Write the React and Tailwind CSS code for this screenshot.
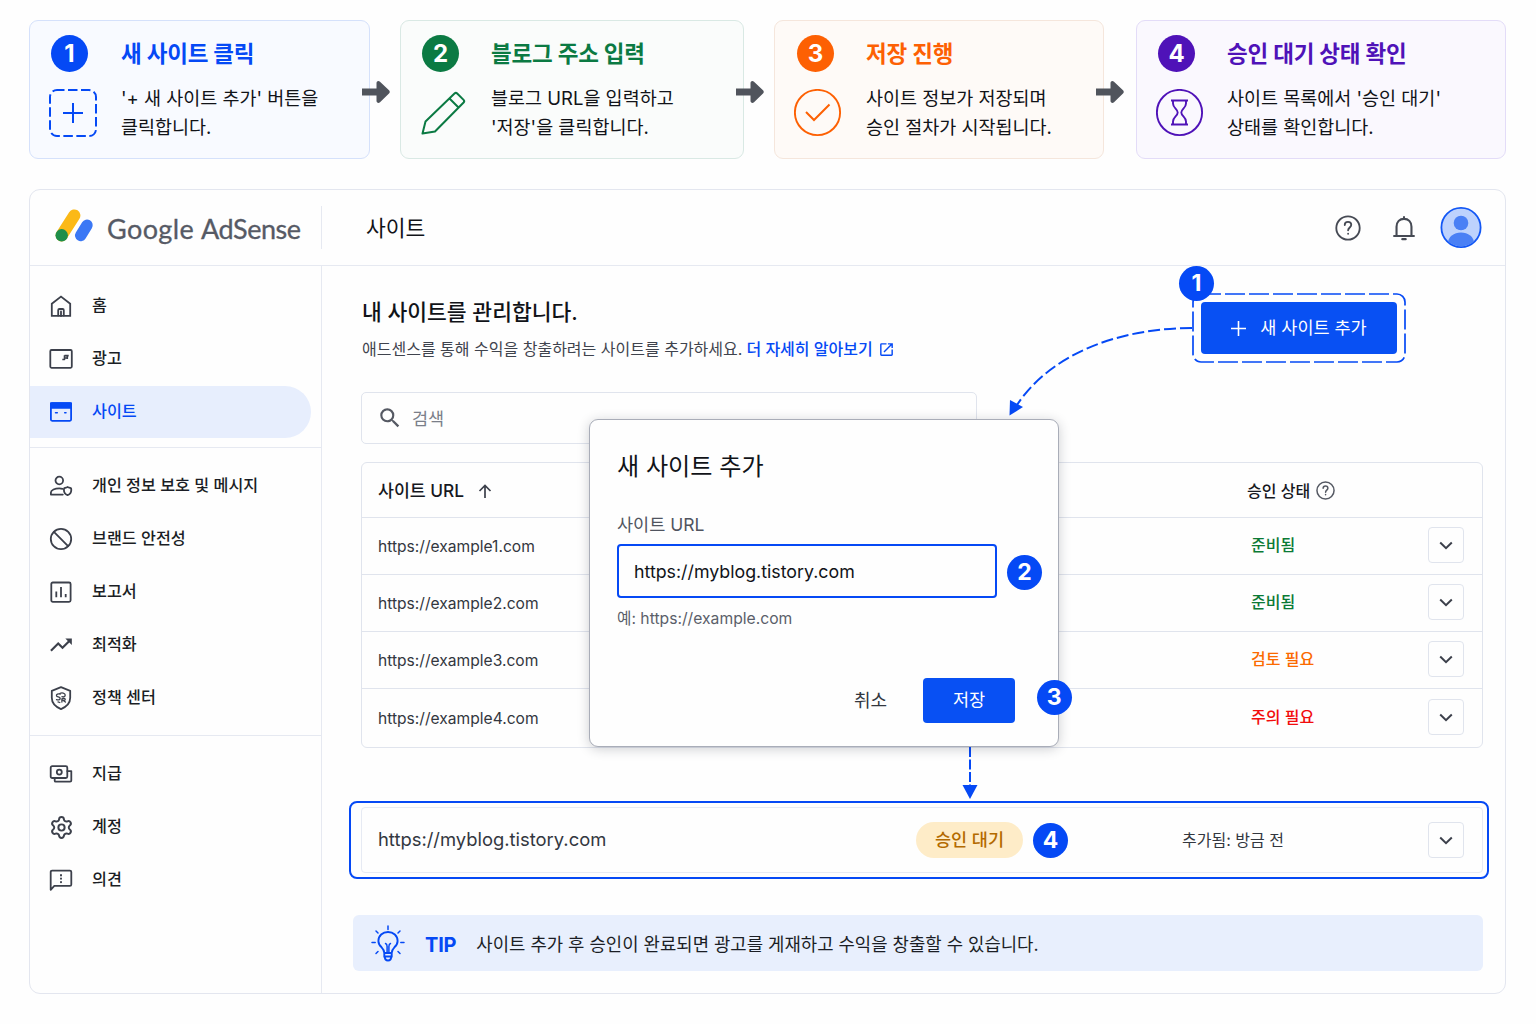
import React from 'react';
import { Settings } from 'lucide-react';
import { MdOpenInNew, MdSearch, MdTrendingUp } from 'react-icons/md';

const steps = [
  {
    n: 1,
    title: '새 사이트 클릭',
    lines: ["'+ 새 사이트 추가' 버튼을", '클릭합니다.'],
    card: 'w-[341px] mr-[30px] bg-[#f8faff] border-[#d5e1fb]',
    inner: 'pl-[21px]',
    badge: 'bg-[#0549f5]',
    text: 'text-[#0549f5]',
    gap: 'w-[70px]',
  },
  {
    n: 2,
    title: '블로그 주소 입력',
    lines: ['블로그 URL을 입력하고', "'저장'을 클릭합니다."],
    card: 'w-[344px] mr-[30px] bg-[#fafcfb] border-[#d9e9e4]',
    inner: 'pl-[21px]',
    badge: 'bg-[#0b7a43]',
    text: 'text-[#0b7a43]',
    gap: 'w-[69px]',
  },
  {
    n: 3,
    title: '저장 진행',
    lines: ['사이트 정보가 저장되며', '승인 절차가 시작됩니다.'],
    card: 'w-[330px] mr-[32px] bg-[#fefaf7] border-[#f5e6dc]',
    inner: 'pl-[22px]',
    badge: 'bg-[#fd6003]',
    text: 'text-[#fd6003]',
    gap: 'w-[69px]',
  },
  {
    n: 4,
    title: '승인 대기 상태 확인',
    lines: ["사이트 목록에서 '승인 대기'", '상태를 확인합니다.'],
    card: 'w-[370px] bg-[#faf8fe] border-[#e3dcf8]',
    inner: 'pl-[21px]',
    badge: 'bg-[#4f12b8]',
    text: 'text-[#4f12b8]',
    gap: 'w-[69px]',
  },
];

const sites = [
  { url: 'https://example1.com', status: '준비됨', color: 'text-[#0b7a35]' },
  { url: 'https://example2.com', status: '준비됨', color: 'text-[#0b7a35]' },
  { url: 'https://example3.com', status: '검토 필요', color: 'text-[#fb6a00]' },
  { url: 'https://example4.com', status: '주의 필요', color: 'text-[#f20d0d]' },
];

const Icon = ({ size = 24, sw = 1.8, className = '', children }) => (
  <svg
    width={size}
    height={size}
    viewBox="0 0 24 24"
    fill="none"
    stroke="currentColor"
    strokeWidth={sw}
    strokeLinecap="round"
    strokeLinejoin="round"
    className={`shrink-0 ${className}`}
  >
    {children}
  </svg>
);

const navGroups = [
  [
    {
      label: '홈',
      icon: (
        <Icon>
          <path d="M2.800 9.800 12 2.600l9.200 7.200V21.800H2.800Z" strokeLinejoin="miter" />
          <path d="M9.200 21.500v-5.300a1.200 1.200 0 0 1 1.200-1.200h3.200a1.200 1.200 0 0 1 1.200 1.200v5.300M12 17.500V22" />
        </Icon>
      ),
    },
    {
      label: '광고',
      icon: (
        <Icon>
          <rect x="1.300" y="3" width="21.500" height="17.800" rx="1.200" />
          <path d="M13.300 12.500h2.200V8.200M15.500 8.600h4.200M18.300 8v4M16 11h2.800" strokeWidth="1.600" strokeLinecap="butt" />
        </Icon>
      ),
    },
    {
      label: '사이트',
      active: true,
      icon: (
        <Icon>
          <rect x="1.900" y="3.200" width="20.200" height="17.600" rx="1.200" />
          <path d="M1.900 3.200h20.200v4.600H1.900z" fill="currentColor" />
          <path d="M6.500 12.700h1.800M15.700 12.700h1.300" strokeWidth="1.500" />
        </Icon>
      ),
    },
  ],
  [
    {
      label: '개인 정보 보호 및 메시지',
      icon: (
        <Icon>
          <circle cx="10.300" cy="6.500" r="3.800" />
          <path d="M13.800 20.600H1.900v-2c0-2.600 4.100-4.200 8.400-4.200 1.100 0 2.200.1 3.200.4" />
          <path d="M18.600 13c-1.300.6-2.400.9-3.500 1.300-.6 3.200.3 5.700 3.500 6.900 3.200-1.200 4.100-3.700 3.500-6.900-1.100-.4-2.200-.7-3.500-1.300Z" />
        </Icon>
      ),
    },
    {
      label: '브랜드 안전성',
      icon: (
        <Icon>
          <circle cx="12" cy="12" r="10.200" />
          <path d="m4.900 4.900 14.200 14.200" />
        </Icon>
      ),
    },
    {
      label: '보고서',
      icon: (
        <Icon>
          <rect x="2.300" y="2.500" width="19.300" height="19.300" rx="1.500" />
          <path d="M7.300 11.500v5.800M12 7v10.300M16.700 14v3.300" strokeLinecap="butt" />
        </Icon>
      ),
    },
    { label: '최적화', icon: <MdTrendingUp size={26} className="-mx-px shrink-0" /> },
    {
      label: '정책 센터',
      icon: (
        <Icon>
          <path d="m12 1.200 9.200 3.600v7c0 5.200-3.700 9-9.200 11.300-5.500-2.300-9.200-6.100-9.200-11.300v-7Z" />
          <path d="M11.300 8c-2.300-.6-4.200.2-3.800 1.800.4 1.500 3.500.8 3.700 2.500.1 1.600-2.200 2-3.700 1.300M10.800 7.500c2-1.300 5.300-.5 5.400 1.500.1 1.600-2 2.400-3.200 1.600M12.900 16v-3.200c1.600-.8 3.300-.5 3.300.6 0 1-1.500 1.100-2.200.8l2.400 1.800M9 15.900l1.800.6" strokeWidth="1.300" />
        </Icon>
      ),
    },
  ],
  [
    {
      label: '지급',
      icon: (
        <Icon>
          <rect x="1.700" y="4.200" width="16.600" height="11.800" rx="1.500" />
          <circle cx="10.300" cy="10.100" r="2.500" />
          <path d="M5.700 16.300v2.400c0 .6.400 1 1 1H21.100c.7 0 1.200-.5 1.200-1.200V9.100h-4" />
        </Icon>
      ),
    },
    { label: '계정', icon: <Settings size={25} strokeWidth={1.9} className="-mr-px shrink-0" /> },
    {
      label: '의견',
      icon: (
        <Icon>
          <path d="M1.700 21.800V4c0-.9.500-1.400 1.400-1.400h17.800c.9 0 1.400.5 1.400 1.400v12.500c0 .9-.5 1.400-1.400 1.400H5.300Z" />
          <path d="M12 7v.6M12 10.400v.4M12 14v.3" strokeWidth="2" />
        </Icon>
      ),
    },
  ],
];

const StepIcon = ({ n }) => {
  if (n === 1) {
    return (
      <svg width="48" height="48" viewBox="0 0 48 48" fill="none" stroke="currentColor" strokeWidth="2" className="-ml-[2px]">
        <rect x="1" y="1" width="46" height="46" rx="7" strokeDasharray="9.500 3.500" strokeDashoffset="2" />
        <path d="M24 14v20M14 24h20" />
      </svg>
    );
  }
  if (n === 2) {
    return (
      <svg width="48" height="48" viewBox="0 0 48 48" fill="none" stroke="currentColor" strokeWidth="2" strokeLinejoin="round" className="-ml-px">
        <path d="M1.500 44.500 4.500 32.500 33.500 4.500c.9-.8 1.900-.8 2.700 0l6.400 6.400c.8.8.8 1.700 0 2.600L14 42.500ZM28.500 9.500l9 9" />
      </svg>
    );
  }
  return (
    <svg
      width="48"
      height="48"
      viewBox="0 0 48 48"
      fill="none"
      stroke="currentColor"
      strokeWidth="1.900"
      className={n === 3 ? '-ml-[3px]' : '-ml-[2px]'}
    >
      <circle cx="23.500" cy="23.500" r="22.600" />
      {n === 3 ? (
        <path d="m12 23 8 8L35.500 15.500" strokeWidth="2" />
      ) : (
        <path d="M15 11.500h17M15 35.500h17M17 11.500v3c0 4.500 4.700 5.500 4.700 9s-4.700 4.500-4.700 9v3M30 11.500v3c0 4.500-4.700 5.500-4.700 9s4.700 4.500 4.700 9v3" />
      )}
    </svg>
  );
};

const StepArrow = () => (
  <svg width="28" height="24" viewBox="0 0 28 24" className="absolute top-[59px] -right-[21px] z-10 text-[#50545c]" fill="currentColor">
    <path d="M0 8.500h14.500V3.200c0-2 2-2.800 3.500-1.500l9 8.600c1 1 1 2.300 0 3.300l-9 8.700c-1.500 1.300-3.500.5-3.500-1.500v-5.300H0Z" />
  </svg>
);

const Badge = ({ n, className }) => (
  <span className={`flex size-[35px] shrink-0 items-center justify-center rounded-full bg-[#0549f5] text-[23px] font-bold leading-none text-white ${className}`}>
    {n}
  </span>
);

const HelpIcon = ({ size, sw }) => (
  <Icon size={size} sw={sw}>
    <circle cx="12" cy="12" r="10.800" />
    <path d="M9 9.300c0-1.800 1.300-2.900 3-2.900s3 1.100 3 2.700c0 2.300-2.900 2.500-2.900 5M12.100 17.200v.2" />
  </Icon>
);

const MoreButton = ({ className = '' }) => (
  <button className={`flex size-[36px] shrink-0 items-center justify-center rounded-[4px] border border-[#e0e4ed] text-[#3c404b] ${className}`}>
    <svg width="14" height="9" viewBox="0 0 14 9" fill="none" stroke="currentColor" strokeWidth="2">
      <path d="m1.200 1.500 5.800 5.700 5.800-5.700" />
    </svg>
  </button>
);

const Steps = () => (
  <div className="flex h-[139px]">
    {steps.map(step => (
      <div key={step.n} className={`relative flex shrink-0 rounded-[9px] border ${step.card} ${step.inner}`}>
        <div className={`flex shrink-0 flex-col pt-[14px] ${step.gap} ${step.text}`}>
          <span className={`mb-[17px] flex size-[37px] items-center justify-center rounded-full text-[24px] font-bold leading-none text-white ${step.badge}`}>
            {step.n}
          </span>
          <StepIcon n={step.n} />
        </div>
        <div className="whitespace-nowrap pt-[15px]">
          <h3 className={`text-[22.500px] leading-[36px] font-bold tracking-[-0.200px] ${step.text}`}>{step.title}</h3>
          <p className="mt-[12px] text-[18.500px] leading-[29px] text-[#111318]">
            {step.lines[0]}
            <br />
            {step.lines[1]}
          </p>
        </div>
        {step.n < 4 && <StepArrow />}
      </div>
    ))}
  </div>
);

const Header = () => (
  <header className="flex h-[76px] shrink-0 items-center border-b border-[#e6e9f1]">
    <div className="flex h-[43px] w-[292px] shrink-0 items-center border-r border-[#e6e9f1] pl-[24px]">
      <svg width="42" height="36" viewBox="0 0 42 36" fill="none" strokeLinecap="round" className="-mt-[3px] shrink-0">
        <path d="M7.700 27.300 20.300 7.500" stroke="#fbb917" strokeWidth="12.200" />
        <circle cx="7.700" cy="27.300" r="6.200" fill="#1e8e4a" />
        <path d="m26.700 27.500 6.300-10.300" stroke="#3b78f5" strokeWidth="11.400" />
      </svg>
      <span className="mt-[3px] ml-[11px] whitespace-nowrap font-[Lato] text-[27px] text-[#565a65] [-webkit-text-stroke:0.300px_#565a65]">
        <span className="tracking-[0.400px]">Google</span> <span className="tracking-[-0.500px]">AdSense</span>
      </span>
    </div>
    <h1 className="mt-px pl-[44px] text-[21.500px] text-[#111318]">사이트</h1>
    <div className="ml-auto flex items-center pr-[23.500px] text-[#464a54]">
      <HelpIcon size={26} sw={1.7} />
      <Icon size={28} sw={1.8} className="mr-[22px] ml-[29px]">
        <path d="M3.500 18.800h17M5.600 18.600V11c0-4.300 2.700-6.800 6.400-6.800s6.400 2.500 6.400 6.800v7.600M12 3.700V2.700" />
        <path d="M10.600 21.600h2.800" strokeWidth="2" />
      </Icon>
      <svg width="42" height="42" viewBox="0 0 42 42">
        <defs>
          <clipPath id="avatar">
            <circle cx="21" cy="20.500" r="19" />
          </clipPath>
        </defs>
        <circle cx="21" cy="20.500" r="19.600" fill="#bdd2fd" stroke="#1257f5" strokeWidth="1.800" />
        <g clipPath="url(#avatar)">
          <circle cx="21" cy="16" r="7.300" fill="#4a80f5" />
          <ellipse cx="21" cy="36" rx="13" ry="10.500" fill="#4a80f5" />
        </g>
      </svg>
    </div>
  </header>
);

const Sidebar = () => (
  <nav className="w-[292px] shrink-0 border-r border-[#e6e9f1] pt-[14px]">
    {navGroups.map((group, i) => (
      <div
        key={i}
        className={i === 1 ? 'mt-[9px] border-t border-[#e6e9f1] pt-[12px]' : i === 2 ? 'mt-[11px] border-t border-[#e6e9f1] pt-[12px]' : ''}
      >
        {group.map(item => (
          <a
            key={item.label}
            className={`mb-px flex h-[52px] items-center gap-[19px] whitespace-nowrap pl-[19px] text-[16.200px] font-medium ${
              item.active ? 'mr-[10px] rounded-r-full bg-[#e7eefd] text-[#0549f5]' : 'text-[#1b1e25]'
            }`}
          >
            <span className={item.active ? '' : 'text-[#3c404b]'}>{item.icon}</span>
            <span className="-mt-px">{item.label}</span>
          </a>
        ))}
      </div>
    ))}
  </nav>
);

const Dialog = () => (
  <div className="absolute top-[153px] left-[267px] z-20 h-[328px] w-[470px] rounded-[9px] border border-[#a9adb8] bg-[#fefefe] pl-[27px] shadow-[0_2px_12px_rgba(30,35,50,0.22)]">
    <h3 className="mt-[29px] text-[24.100px] leading-[36px] text-[#111318]">새 사이트 추가</h3>
    <label className="mt-[28px] block text-[17.500px] leading-[24px] text-[#50545f]">사이트 URL</label>
    <div className="mt-[7px] flex items-center">
      <div className="flex h-[54px] w-[380px] shrink-0 items-center rounded-[4px] border-2 border-[#0549f5] pt-[2px] pl-[15px] text-[17.800px] text-[#111318]">
        https://myblog.tistory.com
      </div>
      <Badge n={2} className="mt-[2px] ml-[10px]" />
    </div>
    <p className="mt-[9px] text-[15.700px] leading-[24px] text-[#5b5f6a]">예: https://example.com</p>
    <div className="mt-[47px] flex items-center">
      <button className="ml-[237px] shrink-0 text-[18px] text-[#33373f]">취소</button>
      <button className="ml-[36px] h-[45px] w-[92px] shrink-0 rounded-[4px] bg-[#0850f3] text-[17.500px] text-white">저장</button>
      <Badge n={3} className="-mt-[6px] ml-[21.500px]" />
    </div>
  </div>
);

const Content = () => (
  <main className="relative flex-1 pr-[22px] pl-[39px]">
    <div className="flex h-[126px] items-start justify-between">
      <div className="whitespace-nowrap pt-[28px] pl-px">
        <h2 className="text-[21.500px] leading-[36px] font-medium text-[#111318]">내 사이트를 관리합니다.</h2>
        <p className="mt-[7px] flex items-center text-[16px] leading-[24px] text-[#3f434d]">
          애드센스를 통해 수익을 창출하려는 사이트를 추가하세요.
          <a className="ml-[4px] flex items-center gap-[5px] font-medium text-[#0549f5]">
            더 자세히 알아보기 <MdOpenInNew size={17} />
          </a>
        </p>
      </div>
      <div className="relative mt-[27px] mr-[77px] p-[9px]">
        <svg className="absolute inset-0 size-full" fill="none" stroke="#0549f5" strokeWidth="1.700">
          <rect x="1" y="1" width="212" height="68" rx="8" strokeDasharray="20 4" />
        </svg>
        <button className="relative flex h-[52px] w-[196px] items-center justify-center gap-[14px] rounded-[4px] bg-[#0850f3] text-[17.500px] text-white">
          <svg width="15" height="15" viewBox="0 0 15 15" stroke="currentColor" strokeWidth="1.600">
            <path d="M7.500 0v15M0 7.500h15" />
          </svg>
          새 사이트 추가
        </button>
        <Badge n={1} className="absolute -top-[27px] -left-[13px]" />
      </div>
    </div>

    <div className="flex h-[52px] w-[616px] items-center rounded-[5px] border border-[#e0e4ed] pl-[15px] text-[17.500px] text-[#7a7e89]">
      <MdSearch size={26} className="mr-[9px] text-[#555963]" />
      <span className="mt-[2px]">검색</span>
    </div>

    <div className="mt-[18px] rounded-[6px] border border-[#e0e4ed]">
      <div className="flex h-[54px] items-center pt-px pl-[16px] text-[17.300px] font-medium text-[#16181e]">
        사이트 URL
        <svg width="14" height="14" viewBox="0 0 14 14" fill="none" stroke="#3c404b" strokeWidth="1.700" className="ml-[14px]">
          <path d="M7 14V1.500M1.500 7 7 1.500 12.500 7" />
        </svg>
        <div className="ml-auto flex w-[235px] items-center gap-[6px] text-[16px]">
          승인 상태
          <span className="text-[#555963]">
            <HelpIcon size={19} sw={1.9} />
          </span>
        </div>
      </div>
      {sites.map(site => (
        <div key={site.url} className="flex h-[57px] items-center border-t border-[#e0e4ed] pr-[18px] pl-[16px] text-[16px] last:h-[59px]">
          <span className="mt-[2px] text-[15.600px] text-[#33373f]">{site.url}</span>
          <span className={`-mt-[2px] ml-auto w-[177px] font-medium ${site.color}`}>{site.status}</span>
          <MoreButton className="-mt-[2px]" />
        </div>
      ))}
    </div>

    <div className="mt-[53px] -mr-[6px] -ml-[12px] h-[78px] rounded-[8px] border-2 border-[#0549f5] py-[4px] pr-[4px] pl-[10px]">
      <div className="flex h-[66px] items-center rounded-[4px] border border-[#e6eaf3] pr-[18px] pl-[16px]">
        <span className="w-[538px] text-[18.400px] text-[#33373f]">https://myblog.tistory.com</span>
        <span className="flex h-[36px] w-[107px] items-center justify-center rounded-full bg-[#feecc8] text-[17.500px] font-medium text-[#b36a00]">
          승인 대기
        </span>
        <Badge n={4} className="ml-[10px]" />
        <span className="ml-[114px] text-[16px] text-[#33373f]">추가됨: 방금 전</span>
        <span className="ml-auto">
          <MoreButton />
        </span>
      </div>
    </div>

    <div className="mt-[36px] -ml-[8px] flex h-[56px] items-center rounded-[6px] bg-[#e8effd] pl-[18px]">
      <svg width="34" height="37" viewBox="0 0 34 37" fill="none" stroke="#0549f5" strokeWidth="1.900" strokeLinecap="round" className="shrink-0">
        <path d="M13.300 28c0-3-1-4-2.700-5.700-1.900-1.700-3.200-3.500-3.200-6.300 0-5.200 4.200-9 9.600-9s9.600 3.800 9.600 9c0 2.800-1.300 4.600-3.200 6.300-1.700 1.700-2.700 2.700-2.700 5.700ZM13.300 28v3.500h7.400V28M13.800 31.500c0 2.700.7 4 3.200 4s3.200-1.300 3.200-4" />
        <path d="M14.500 18.500c1.300.5 1.600 1.500 1.600 3V28M19.500 18.500c-1.300.5-1.600 1.500-1.600 3V28M17 .9v3.600M1 17.500h3.200M29.800 17.500H33M5 6l2 2M29 6l-2 2M5 28.500l2-2M29 28.500l-2-2" strokeWidth="1.500" />
      </svg>
      <b className="mt-[4px] ml-[20px] text-[20px] tracking-[-0.200px] text-[#0549f5]">TIP</b>
      <p className="mt-[5px] ml-[20px] whitespace-nowrap text-[17.800px] text-[#1b1e25]">
        사이트 추가 후 승인이 완료되면 광고를 게재하고 수익을 창출할 수 있습니다.
      </p>
    </div>

    <Dialog />

    {/* guide arrows */}
    <svg width="190" height="95" viewBox="0 0 190 95" fill="none" className="absolute top-[57px] left-[684px] z-10">
      <path d="M186 5C115 5 45 30 11 82" stroke="#0549f5" strokeWidth="2" strokeDasharray="12 4" />
      <path d="m4 77 13 7L3.500 92.500Z" fill="#0549f5" />
    </svg>
    <svg width="16" height="54" viewBox="0 0 16 54" className="absolute top-[481px] left-[640px] z-10">
      <path d="M8 0v40" stroke="#0549f5" strokeWidth="2" strokeDasharray="10 2.500" />
      <path d="M.5 38h15L8 52Z" fill="#0549f5" />
    </svg>
  </main>
);

export default function App() {
  return (
    <div className="h-[1024px] w-[1536px] overflow-hidden bg-[#fefefe] pt-[20px] pl-[29px] font-['Inter','Noto_Sans_CJK_KR',sans-serif]">
      <Steps />
      <div className="mt-[30px] flex h-[805px] w-[1477px] flex-col rounded-[11px] border border-[#e3e6ef]">
        <Header />
        <div className="flex flex-1">
          <Sidebar />
          <Content />
        </div>
      </div>
    </div>
  );
}
